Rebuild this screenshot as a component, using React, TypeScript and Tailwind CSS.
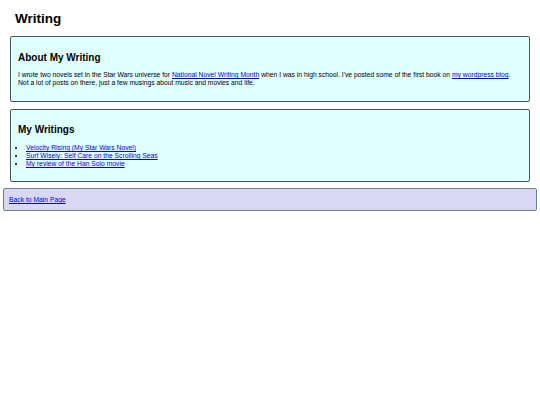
export default function App() {
  return (
    <div className="min-h-[405px] bg-white text-black" style={{ fontFamily: '"Liberation Sans", Arial, sans-serif' }}>
      <h1 className="ml-[15px] pt-[11px] pb-[1px] text-[13.5px] font-bold leading-[16px]">Writing</h1>

      {/* About */}
      <section className="mx-[10px] mt-[8px] rounded-[2px] border border-[#3d5c5c] bg-[#e0ffff] px-[7px] pt-[15px] pb-[14px]">
        <h2 className="text-[10px] font-bold leading-[12px]">About My Writing</h2>
        <p className="mt-[7px] text-[6.75px] leading-[8px]">
          I wrote two novels set in the Star Wars universe for{" "}
          <a href="#" className="text-[#0000ee] underline">National Novel Writing Month</a> when I was in high
          school. I've posted some of the first book on{" "}
          <a href="#" className="text-[#0000ee] underline">my wordpress blog</a>. Not a lot of posts on there, just
          a few musings about music and movies and life.
        </p>
      </section>

      {/* Writings list */}
      <section className="mx-[10px] mt-[7px] rounded-[2px] border border-[#3d5c5c] bg-[#e0ffff] px-[7px] pt-[14px] pb-[13px]">
        <h2 className="text-[10px] font-bold leading-[12px]">My Writings</h2>
        <ul className="mt-[8px] list-disc pl-[8px] text-[6.75px] leading-[8px]">
          <li>
            <a href="#" className="text-[#0000ee] underline">Velocity Rising (My Star Wars Novel)</a>
          </li>
          <li>
            <a href="#" className="text-[#0000ee] underline">Surf Wisely: Self Care on the Scrolling Seas</a>
          </li>
          <li>
            <a href="#" className="text-[#0000ee] underline">My review of the Han Solo movie</a>
          </li>
        </ul>
      </section>

      <div className="mx-[3px] mt-[6px] rounded-[2px] border border-[#708090] bg-[#d9d8f2] px-[5px] pt-[7px] pb-[6px] text-[6.75px] leading-[8px]">
        <a href="#" className="text-[#0000ee] underline">Back to Main Page</a>
      </div>
    </div>
  );
}
